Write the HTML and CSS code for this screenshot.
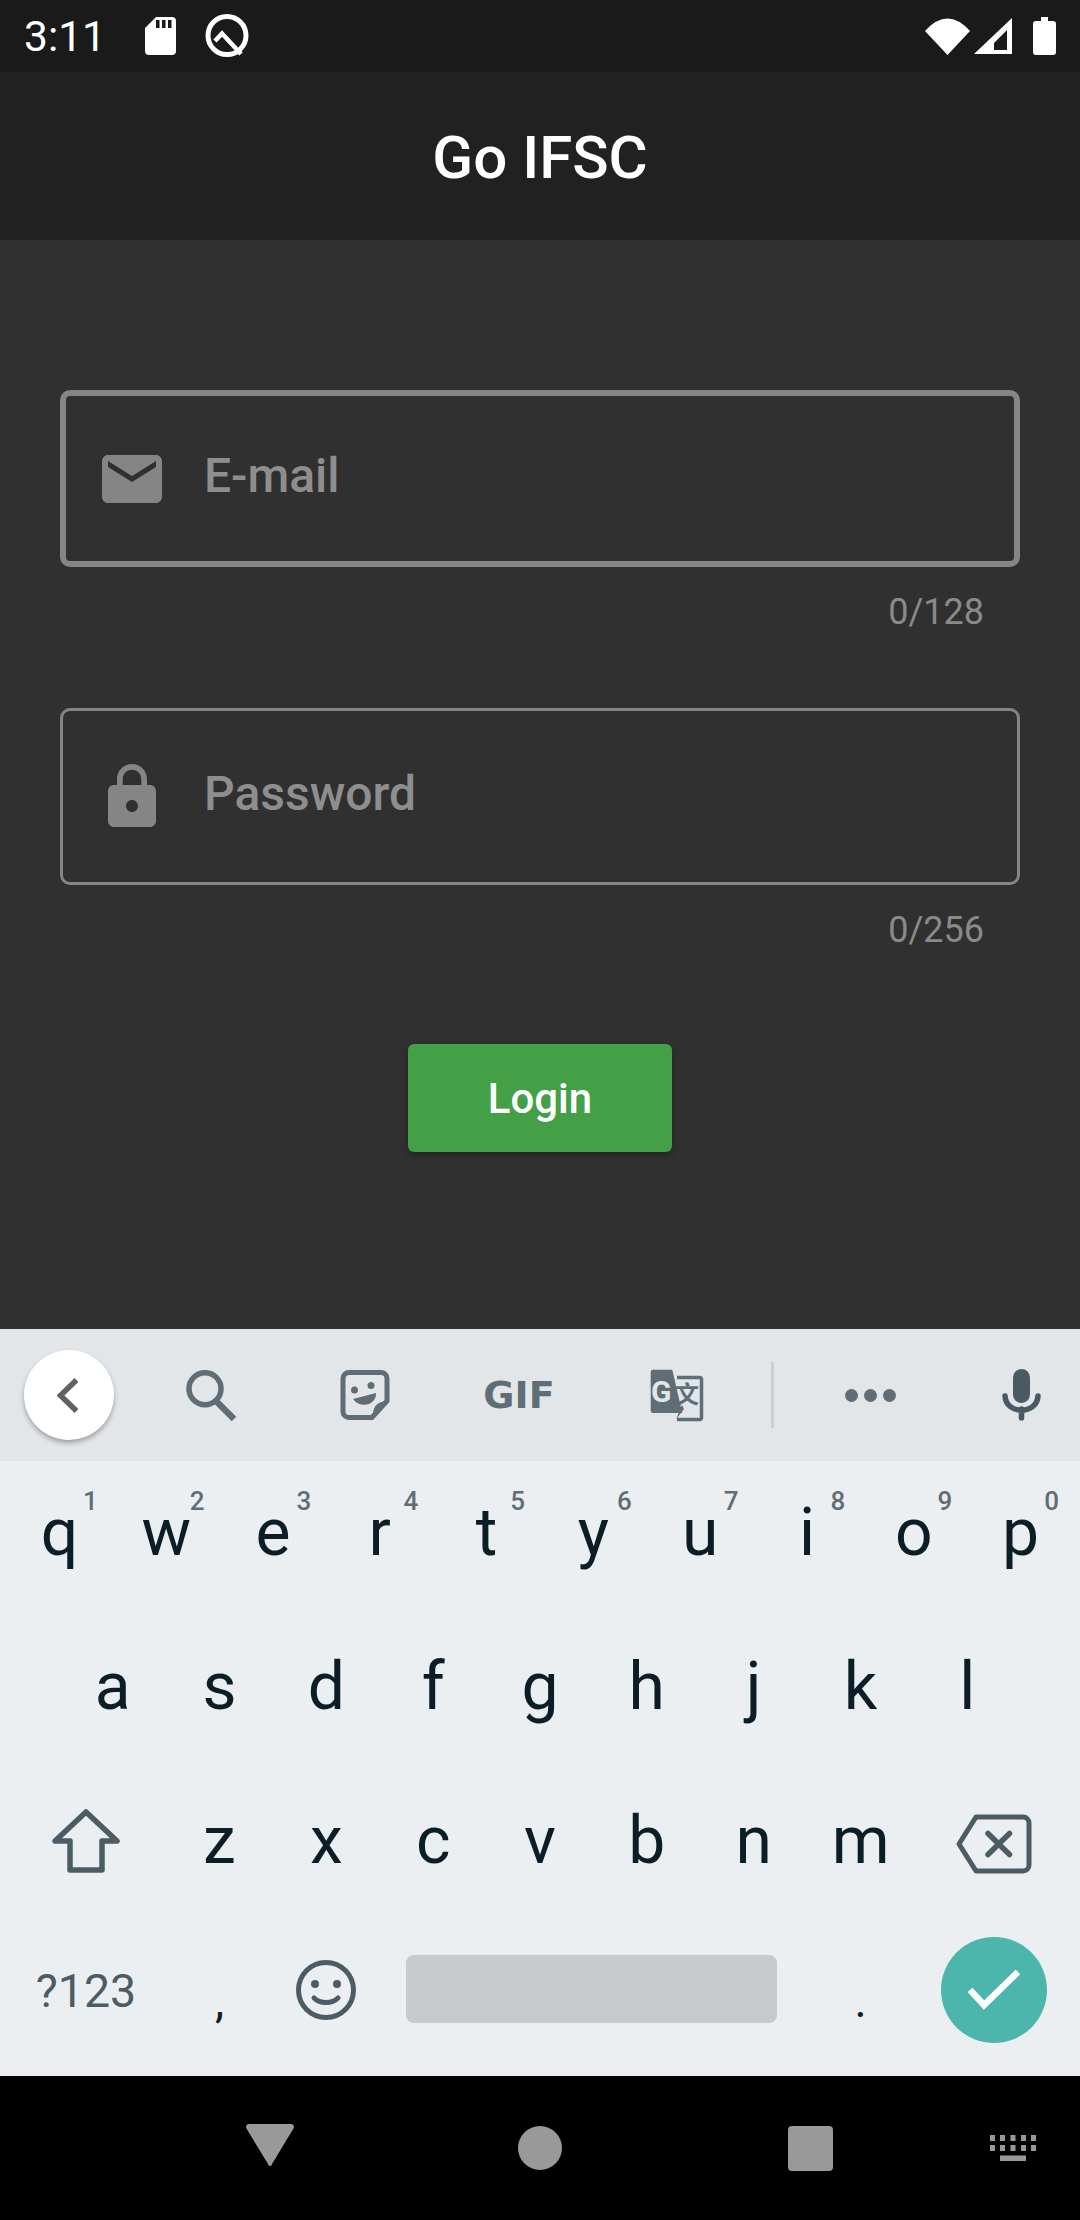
FILE: index.html

```html
<!DOCTYPE html>
<html lang="en">
<head>
  <meta charset="UTF-8">
  <title>Go IFSC</title>
  <link rel="stylesheet" href="styles.css">
</head>
<body>
  <div class="statusbar">
    <span class="clock">3:11</span>
    <svg class="st-sd" viewBox="0 0 31 38"><path fill-rule="evenodd" fill="#fff" d="M11 0H27a4 4 0 0 1 4 4V34a4 4 0 0 1-4 4H4a4 4 0 0 1-4-4V11ZM11 3v8h3.500V3ZM17 3v8h3.500V3ZM23 3v8h3.500V3Z"/></svg>
    <svg class="st-q" viewBox="0 0 44 44"><circle cx="22" cy="21.500" r="19" fill="none" stroke="#fff" stroke-width="5"/><path d="M10 27L17 19.500 36 40" fill="none" stroke="#fff" stroke-width="4.500"/></svg>
    <div class="st-right">
      <svg class="st-wifi" viewBox="0 0 45 37"><path fill="#fff" d="M0 13Q22.500-12 45 13L22.500 37Z"/></svg>
      <svg class="st-signal" viewBox="0 0 38 36"><path fill-rule="evenodd" fill="#fff" d="M38 0V36H0ZM33 12L20 25V32H33Z"/></svg>
      <svg class="st-battery" viewBox="0 0 23 38"><path fill="#fff" d="M8 0H15V4H20a3 3 0 0 1 3 3V35a3 3 0 0 1-3 3H3a3 3 0 0 1-3-3V7a3 3 0 0 1 3-3H8Z"/></svg>
    </div>
  </div>

  <header class="appbar">Go IFSC</header>

  <main class="content">
    <div class="field field-focus">
      <svg class="field-icon" viewBox="0 0 24 24"><path d="M20 4H4c-1.100 0-1.990.9-1.990 2L2 18c0 1.100.9 2 2 2h16c1.100 0 2-.9 2-2V6c0-1.100-.9-2-2-2zm0 4l-8 5-8-5V6l8 5 8-5v2z"/></svg>
      <span class="field-label">E-mail</span>
    </div>
    <div class="counter">0/128</div>
    <div class="field">
      <svg class="field-icon" viewBox="0 0 24 24"><path d="M18 8h-1V6c0-2.760-2.240-5-5-5S7 3.240 7 6v2H6c-1.100 0-2 .9-2 2v10c0 1.100.9 2 2 2h12c1.100 0 2-.9 2-2V10c0-1.100-.9-2-2-2zm-6 9c-1.100 0-2-.9-2-2s.9-2 2-2 2 .9 2 2-.9 2-2 2zm3.100-9H8.900V6c0-1.710 1.390-3.100 3.100-3.100 1.710 0 3.100 1.390 3.100 3.100v2z"/></svg>
      <span class="field-label">Password</span>
    </div>
    <div class="counter counter-last">0/256</div>
    <button class="login">Login</button>
  </main>

  <section class="keyboard">
    <div class="strip">
      <div class="strip-back">
        <div class="back-circle">
          <svg class="ic-chevron" viewBox="0 0 22 35"><path d="M19.500 2L3.500 17.500 19.500 33" fill="none" stroke="#616161" stroke-width="5.500"/></svg>
        </div>
      </div>
      <div class="strip-cell">
        <svg class="ic-search" viewBox="0 0 51 51"><circle cx="19" cy="18.700" r="16" fill="none" stroke="#5f6e76" stroke-width="5.500"/><path d="M30 31L48 49" stroke="#5f6e76" stroke-width="6.500"/></svg>
      </div>
      <div class="strip-cell">
        <svg class="ic-sticker" viewBox="0 0 50 50"><path d="M9 2.500H41a6 6 0 0 1 6 6V31L32 47.500H9a6 6 0 0 1-6-6V8.500a6 6 0 0 1 6-6Z" fill="none" stroke="#5f6e76" stroke-width="5"/><circle cx="14.500" cy="20" r="3.500" fill="#5f6e76"/><circle cx="31" cy="15.500" r="3.500" fill="#5f6e76"/><path d="M13 29L36 23C37 34 21 40 13 29Z" fill="#5f6e76"/><path d="M47 32C38 30 32 37 33 47Z" fill="#5f6e76"/></svg>
      </div>
      <div class="strip-cell"><span class="gif">GIF</span></div>
      <div class="strip-cell">
        <svg class="ic-translate" viewBox="0 0 54 54">
          <path d="M27 8.500H50a1.500 1.500 0 0 1 1.500 1.500V49a1.500 1.500 0 0 1-1.500 1.500H27" fill="none" stroke="#5f6e76" stroke-width="3.500"/>
          <path d="M3 .7H22.300L32.300 44H3a2.300 2.300 0 0 1-2.300-2.300V3A2.300 2.300 0 0 1 3 .7Z" fill="#5f6e76"/>
          <path d="M26 50.500L34 40 32 36Z" fill="#5f6e76"/>
          <text x="1" y="33" class="tr-g">G</text>
          <text x="25" y="34" class="tr-wen">文</text>
        </svg>
      </div>
      <div class="strip-divider"></div>
      <div class="strip-dots"><i></i><i></i><i></i></div>
      <div class="strip-mic">
        <svg class="ic-mic" viewBox="0 0 39 52"><rect x="11" y="0" width="17" height="34" rx="8.500" fill="#4a5a63"/><path d="M3 27C4 46 35 46 36 27M19.500 40V49" fill="none" stroke="#4a5a63" stroke-width="5.500" stroke-linecap="round"/></svg>
      </div>
    </div>

    <div class="row">
      <div class="key">q<sup class="hint">1</sup></div>
      <div class="key">w<sup class="hint">2</sup></div>
      <div class="key">e<sup class="hint">3</sup></div>
      <div class="key">r<sup class="hint">4</sup></div>
      <div class="key">t<sup class="hint">5</sup></div>
      <div class="key">y<sup class="hint">6</sup></div>
      <div class="key">u<sup class="hint">7</sup></div>
      <div class="key">i<sup class="hint">8</sup></div>
      <div class="key">o<sup class="hint">9</sup></div>
      <div class="key">p<sup class="hint">0</sup></div>
    </div>
    <div class="row row-home">
      <div class="key">a</div>
      <div class="key">s</div>
      <div class="key">d</div>
      <div class="key">f</div>
      <div class="key">g</div>
      <div class="key">h</div>
      <div class="key">j</div>
      <div class="key">k</div>
      <div class="key">l</div>
    </div>
    <div class="row">
      <div class="key key-wide">
        <svg class="ic-shift" viewBox="0 0 68 65"><path d="M34 4L65 33H50V62H18V33H3Z" fill="none" stroke="#4c5c64" stroke-width="5.500" stroke-linejoin="round"/></svg>
      </div>
      <div class="key">z</div>
      <div class="key">x</div>
      <div class="key">c</div>
      <div class="key">v</div>
      <div class="key">b</div>
      <div class="key">n</div>
      <div class="key">m</div>
      <div class="key key-wide key-back">
        <svg class="ic-backspace" viewBox="0 0 76 60"><path d="M3 30L20 3H67a6 6 0 0 1 6 6V51a6 6 0 0 1-6 6H20Z" fill="none" stroke="#4c5c64" stroke-width="5" stroke-linejoin="round"/><path d="M32 19.500L53.500 40.500M53.500 19.500L32 40.500" fill="none" stroke="#4c5c64" stroke-width="5.500" stroke-linecap="round"/></svg>
      </div>
    </div>
    <div class="row row-last">
      <div class="key key-wide key-sym">?123</div>
      <div class="key key-punct">,</div>
      <div class="key">
        <svg class="ic-emoji" viewBox="0 0 60 60"><circle cx="30" cy="30" r="27.500" fill="none" stroke="#4c5c64" stroke-width="5"/><circle cx="19" cy="24" r="4" fill="#4c5c64"/><circle cx="41" cy="24" r="4" fill="#4c5c64"/><path d="M18 38C24 44 36 44 42 38" fill="none" stroke="#4c5c64" stroke-width="5" stroke-linecap="round"/></svg>
      </div>
      <div class="key key-space"><div class="spacebar"></div></div>
      <div class="key key-punct">.</div>
      <div class="key key-wide">
        <div class="enter">
          <svg class="ic-check" viewBox="0 0 52 40"><path d="M2 20L16 35 50 2" fill="none" stroke="#fff" stroke-width="6.500"/></svg>
        </div>
      </div>
    </div>
  </section>

  <nav class="navbar">
    <div class="nav-cell"><svg class="nav-back" viewBox="0 0 48 42"><path d="M3 0H45a3 3 0 0 1 2.800 4L26 40a2 2 0 0 1-4 0L.2 4A3 3 0 0 1 3 0Z" fill="#999"/></svg></div>
    <div class="nav-cell"><div class="nav-home"></div></div>
    <div class="nav-cell"><div class="nav-recent"></div></div>
    <div class="nav-kbd">
      <svg viewBox="0 0 46 26" class="nav-kbd-icon"><path fill="#999" d="M0 0h5v6H0zM10 0h5v6h-5zM20.500 0h5v6h-5zM31 0h5v6h-5zM41 0h5v6h-5zM0 10h5v6H0zM10 10h5v6h-5zM20.500 10h5v6h-5zM31 10h5v6h-5zM41 10h5v6h-5zM10 20.500h26V26H10z"/></svg>
    </div>
  </nav>
</body>
</html>
```

FILE: styles.css

```css
* {
  box-sizing: border-box;
}
body {
  margin: 0;
  width: 1080px;
  height: 2220px;
  overflow: hidden;
  display: flex;
  flex-direction: column;
  font-family: Roboto, "Noto Sans", sans-serif;
  background-color: #303030;
}
svg {
  display: block;
}

/* status bar */
.statusbar {
  height: 72px;
  flex: none;
  display: flex;
  align-items: center;
  padding: 0 24px 0 24px;
  background-color: #1a1a1a;
  color: #fff;
}
.clock {
  font-size: 42.5px;
  width: 121px;
}
.st-sd {
  width: 31px;
  height: 38px;
  margin-right: 29px;
}
.st-q {
  width: 44px;
  height: 44px;
}
.st-right {
  margin-left: auto;
  display: flex;
  align-items: center;
}
.st-wifi {
  width: 45px;
  height: 37px;
  margin-right: 4px;
}
.st-signal {
  width: 38px;
  height: 36px;
  margin-right: 21px;
}
.st-battery {
  width: 23px;
  height: 38px;
}

/* app bar */
.appbar {
  height: 168px;
  flex: none;
  display: flex;
  align-items: center;
  justify-content: center;
  background-color: #212121;
  color: #fff;
  font-size: 60px;
  font-weight: 500;
  padding-top: 3px;
}

/* form */
.content {
  height: 1089px;
  flex: none;
  padding: 150px 60px 0;
  display: flex;
  flex-direction: column;
  align-items: center;
}
.field {
  width: 960px;
  height: 177px;
  flex: none;
  display: flex;
  align-items: center;
  padding-left: 33px;
  border: 3px solid #858585;
  border-radius: 10px;
}
.field-focus {
  border-width: 6px;
  padding-left: 30px;
}
.field-icon {
  width: 72px;
  height: 72px;
  fill: #858585;
  flex: none;
}
.field-label {
  margin-left: 36px;
  margin-bottom: 7px;
  font-size: 48px;
  font-weight: 500;
  color: #8e8e8e;
}
.counter {
  width: 100%;
  height: 141px;
  flex: none;
  padding: 24px 36px 0 0;
  text-align: right;
  font-size: 36px;
  color: #8a8a8a;
}
.counter-last {
  height: 159px;
}
.login {
  width: 264px;
  height: 108px;
  flex: none;
  padding: 0;
  border: none;
  border-radius: 6px;
  background-color: #43a047;
  color: #fff;
  font-family: inherit;
  font-size: 42px;
  font-weight: 500;
  box-shadow: 0 3px 6px rgba(0,0,0,0.3);
}

/* keyboard */
.keyboard {
  height: 747px;
  flex: none;
  background-color: #eceff1;
}
.strip {
  height: 132px;
  display: flex;
  align-items: center;
  background-color: #e2e6e9;
}
.strip-back {
  width: 134px;
  padding-left: 24px;
}
.back-circle {
  width: 90px;
  height: 90px;
  border-radius: 50%;
  background: #fff;
  box-shadow: 0 3px 5px rgba(0,0,0,0.3);
  display: flex;
  align-items: center;
  justify-content: center;
}
.ic-chevron {
  width: 22px;
  height: 35px;
  margin-right: 2px;
}
.strip-cell {
  width: 154px;
  display: flex;
  justify-content: center;
}
.ic-search {
  width: 51px;
  height: 51px;
  margin-top: 1px;
}
.ic-sticker {
  width: 50px;
  height: 50px;
}
.gif {
  font-family: "DejaVu Sans", sans-serif;
  font-size: 38px;
  font-weight: 700;
  color: #5f6e76;
}
.ic-translate {
  width: 54px;
  height: 54px;
  margin: 2px 0 0 8px;
}
.tr-g {
  font-family: Roboto, sans-serif;
  font-size: 30px;
  font-weight: 700;
  fill: #e2e6e9;
}
.tr-wen {
  font-family: "Noto Sans CJK SC", sans-serif;
  font-size: 24px;
  font-weight: 700;
  fill: #5f6e76;
}
.strip-divider {
  width: 3px;
  height: 66px;
  margin-left: 21px;
  background-color: #ccd0d3;
}
.strip-dots {
  width: 192px;
  display: flex;
  justify-content: center;
  gap: 6px;
}
.strip-dots i {
  width: 13px;
  height: 13px;
  border-radius: 50%;
  background-color: #5f6e76;
}
.strip-mic {
  width: 110px;
  display: flex;
  justify-content: center;
}
.ic-mic {
  width: 39px;
  height: 52px;
}

.row {
  height: 153.75px;
  display: flex;
  padding: 0 6px;
  color: #0b1d27;
  font-size: 66px;
}
.row-home {
  padding: 0 59.4px;
}
.key {
  position: relative;
  flex: 1 1 0;
  display: flex;
  align-items: center;
  justify-content: center;
  padding-bottom: 10px;
}
.key-wide {
  flex: 0 0 160px;
}
.key-back {
  padding-bottom: 2px;
}
.row-last .key {
  padding-bottom: 18px;
}
.row-last .key-space {
  flex: 0 0 427px;
  justify-content: flex-start;
  padding: 0 0 20px 26px;
}
.row-last .key-sym {
  font-size: 46.5px;
  color: #4c5c64;
  padding-bottom: 16px;
}
.row-last .key-punct {
  font-size: 46px;
  padding-top: 22px;
}
.hint {
  position: absolute;
  top: 25px;
  right: 15px;
  font-size: 26px;
  line-height: 30px;
  font-weight: 500;
  color: #5f6e76;
}
.spacebar {
  width: 371px;
  height: 68px;
  border-radius: 8px;
  background-color: #c7cacd;
}
.ic-shift {
  width: 68px;
  height: 65px;
}
.ic-backspace {
  width: 76px;
  height: 60px;
}
.ic-emoji {
  width: 60px;
  height: 60px;
  margin-right: 2px;
}
.enter {
  width: 106px;
  height: 106px;
  border-radius: 50%;
  background-color: #4db6ac;
  display: flex;
  align-items: center;
  justify-content: center;
}
.ic-check {
  width: 52px;
  height: 40px;
}

/* nav bar */
.navbar {
  height: 144px;
  flex: none;
  display: flex;
  align-items: center;
  padding-left: 135px;
  background-color: #000;
}
.nav-cell {
  width: 270px;
  display: flex;
  justify-content: center;
}
.nav-back {
  width: 48px;
  height: 42px;
  margin-bottom: 6px;
}
.nav-home {
  width: 44px;
  height: 44px;
  border-radius: 50%;
  background-color: #999;
}
.nav-recent {
  width: 45px;
  height: 45px;
  border-radius: 4px;
  background-color: #999;
}
.nav-kbd {
  margin-left: 45px;
}
.nav-kbd-icon {
  width: 46px;
  height: 26px;
}
```
